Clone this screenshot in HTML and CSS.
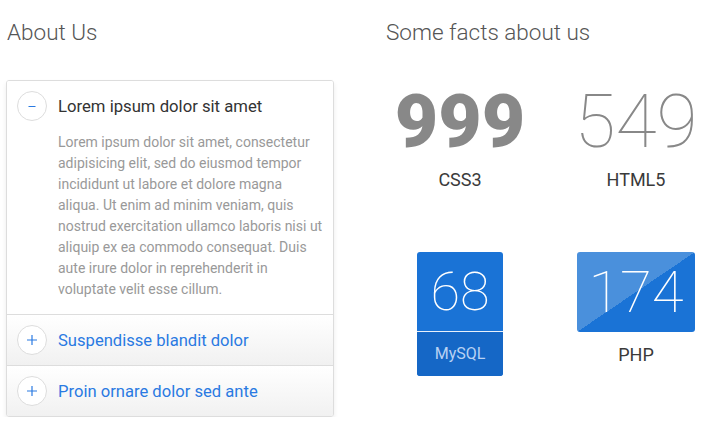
FILE: index.html
```html
<!DOCTYPE html>
<html>
<head>
<meta charset="utf-8">
<link rel="stylesheet" href="styles.css">
</head>
<body>
<div class="page">
  <section class="about">
    <h2 class="title">About Us</h2>
    <div class="accordion">
      <div class="item open">
        <div class="item-head">
          <span class="toggle">
            <svg width="12" height="12" viewBox="0 0 12 12"><path d="M2.5 6.5h7" stroke="#2a7ae2" stroke-width="1.2"/></svg>
          </span>
          <span class="item-title">Lorem ipsum dolor sit amet</span>
        </div>
        <div class="item-body">Lorem ipsum dolor sit amet, consectetur adipisicing elit, sed do eiusmod tempor incididunt ut labore et dolore magna aliqua. Ut enim ad minim veniam, quis nostrud exercitation ullamco laboris nisi ut aliquip ex ea commodo consequat. Duis aute irure dolor in reprehenderit in voluptate velit esse cillum.</div>
      </div>
      <div class="item">
        <div class="item-head">
          <span class="toggle">
            <svg width="12" height="12" viewBox="0 0 12 12"><path d="M1 6h10M6 1v10" stroke="#2a7ae2" stroke-width="1.2"/></svg>
          </span>
          <span class="item-title link">Suspendisse blandit dolor</span>
        </div>
      </div>
      <div class="item">
        <div class="item-head">
          <span class="toggle">
            <svg width="12" height="12" viewBox="0 0 12 12"><path d="M1 6h10M6 1v10" stroke="#2a7ae2" stroke-width="1.2"/></svg>
          </span>
          <span class="item-title link">Proin ornare dolor sed ante</span>
        </div>
      </div>
    </div>
  </section>
  <section class="facts">
    <h2 class="title">Some facts about us</h2>
    <div class="stats">
      <div class="stat">
        <div class="num bold">999</div>
        <div class="label">CSS3</div>
      </div>
      <div class="stat">
        <div class="num thin">549</div>
        <div class="label">HTML5</div>
      </div>
      <div class="stat">
        <div class="tile">
          <div class="tile-num">68</div>
          <div class="tile-label">MySQL</div>
        </div>
      </div>
      <div class="stat">
        <div class="card">174</div>
        <div class="label php">PHP</div>
      </div>
    </div>
  </section>
</div>
</body>
</html>
```

FILE: styles.css
```css
* { box-sizing: border-box; }
html, body { margin: 0; padding: 0; background: #fff; }
body { font-family: Roboto, "Open Sans", sans-serif; color: #333; }

.page {
  display: grid;
  grid-template-columns: 328px 1fr;
  column-gap: 51px;
  padding: 0 6px;
}

.title {
  margin: 0;
  padding: 16px 0 0 1px;
  font-size: 22.5px;
  font-weight: 300;
  color: #555;
  line-height: 32px;
}

.accordion {
  margin-top: 32px;
  border: 1px solid #ddd;
  border-radius: 3px;
  box-shadow: 0 3px 5px rgba(0,0,0,0.08);
  overflow: hidden;
}

.item + .item { border-top: 1px solid #ddd; }

.item-head {
  height: 50px;
  display: flex;
  align-items: center;
  gap: 11px;
  padding-left: 10px;
  background: linear-gradient(#fff, #f1f1f1);
}
.item.open .item-head { background: #fff; }

.toggle {
  width: 30px;
  height: 30px;
  border: 1px solid #ddd;
  border-radius: 50%;
  display: flex;
  align-items: center;
  justify-content: center;
  background: #fff;
}

.item-title { font-size: 16.7px; color: #333; }
.item-title.link { color: #2a7ae2; font-size: 16.6px; }

.item-body {
  padding: 1px 8px 14px 51px;
  font-size: 14px;
  line-height: 21px;
  color: #999;
  background: #fff;
}

.stats {
  margin-top: 30px;
  margin-left: -13px;
  display: grid;
  grid-template-columns: 176px 176px;
  grid-template-rows: 174px auto;
}

.stat {
  display: flex;
  flex-direction: column;
  align-items: center;
}

.num {
  font-size: 75px;
  line-height: 86px;
  color: #888;
}
.num.bold { font-weight: 900; }
.num.thin { font-weight: 100; }

.label {
  font-size: 18px;
  line-height: 20px;
  margin-top: 6px;
  color: #3a3a3a;
}

.tile {
  width: 86px;
  border-radius: 3px;
  overflow: hidden;
  background: #1a73d6;
  color: #fff;
  text-align: center;
}
.tile-num {
  height: 80px;
  font-size: 54px;
  font-weight: 100;
  line-height: 80px;
  border-bottom: 1px solid #e8f0fb;
}
.tile-label {
  height: 44px;
  line-height: 44px;
  font-size: 16px;
  color: #b8d2f3;
  background: #1567c6;
}

.card {
  width: 118px;
  height: 80px;
  border-radius: 3px;
  background: linear-gradient(to bottom right, #4a90dc 50%, #1a73d6 50%);
  color: #fff;
  font-size: 58px;
  font-weight: 100;
  line-height: 80px;
  text-align: center;
}
.label.php { margin-top: 13px; }
```
